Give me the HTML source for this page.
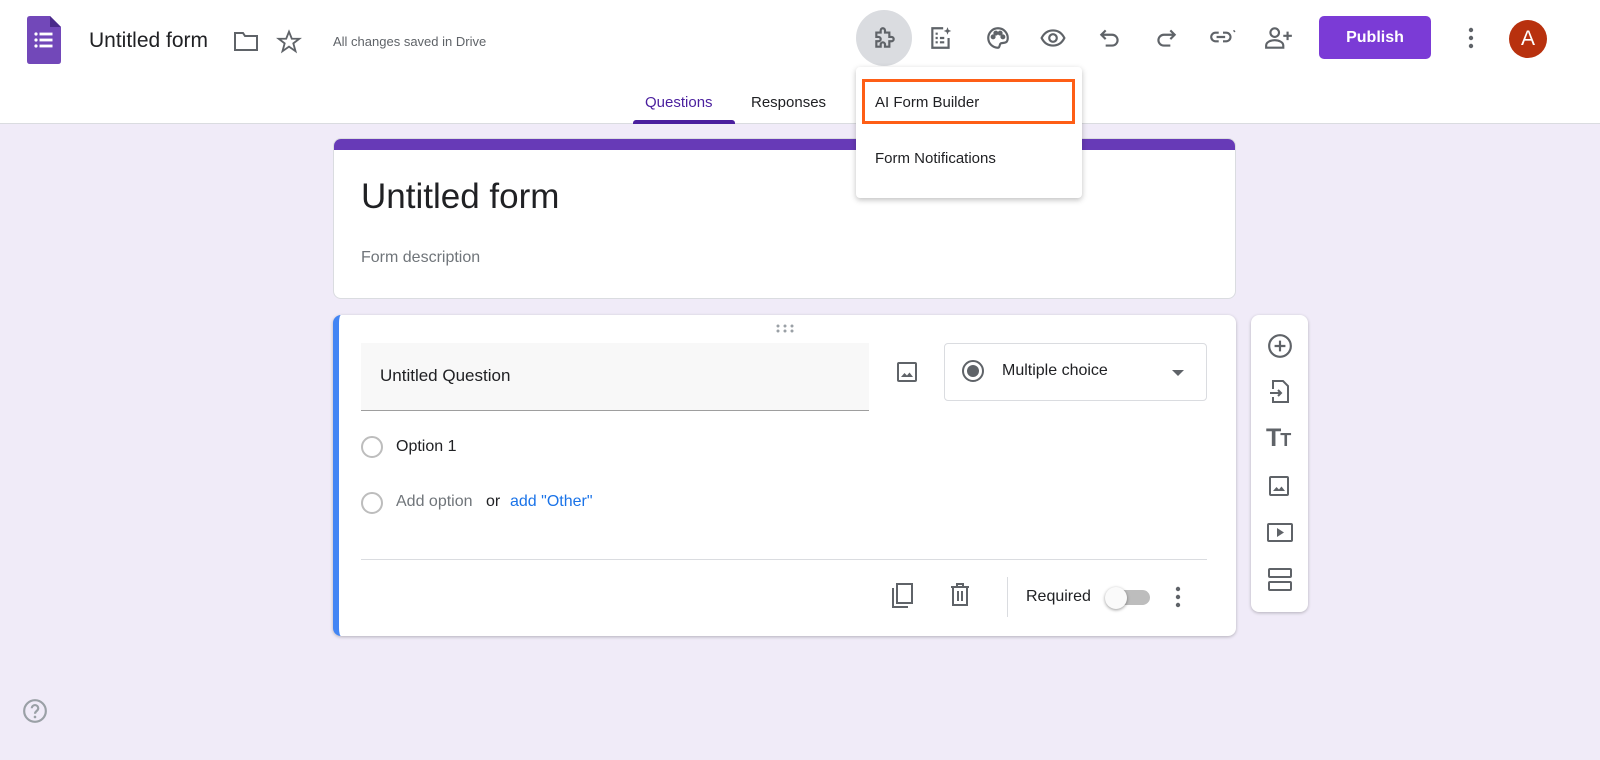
<!DOCTYPE html>
<html><head><style>
*{box-sizing:border-box;margin:0;padding:0}
body{width:1600px;height:760px;background:#f0ebf8;font-family:"Liberation Sans",Arial,sans-serif;position:relative;overflow:hidden;color:#202124}
.a{position:absolute}
svg{display:block}
.ic{fill:none;stroke:#5f6368;stroke-width:2}
</style></head><body>
<div class="a" style="left:0;top:0;width:1600px;height:124px;background:#fff;border-bottom:1px solid #dadce0"></div>
<!-- logo -->
<svg class="a" style="left:27px;top:16px" width="34" height="48" viewBox="0 0 34 48"><path d="M3 0H23L34 11V45Q34 48 31 48H3Q0 48 0 45V3Q0 0 3 0Z" fill="#7248b9"/><path d="M23 0V11H34Z" fill="#4a2a8a"/><g fill="#fff"><circle cx="9" cy="18" r="1.6"/><circle cx="9" cy="24" r="1.6"/><circle cx="9" cy="30" r="1.6"/><rect x="12.5" y="16.6" width="13" height="2.8"/><rect x="12.5" y="22.6" width="13" height="2.8"/><rect x="12.5" y="28.6" width="13" height="2.8"/></g></svg>
<div class="a" style="left:89px;top:29px;font-size:21px">Untitled form</div>
<svg class="a ic" style="left:233px;top:30px" width="26" height="22"><path d="M2 3H10L12 6H24V20H2Z"/></svg>
<svg class="a ic" style="left:276px;top:29px" width="26" height="26" viewBox="0 0 24 24"><path d="M12 2.5L14.6 9H21.5L16 13.3L18 20.5L12 16.3L6 20.5L8 13.3L2.5 9H9.4Z" stroke-width="1.7"/></svg>
<div class="a" style="left:333px;top:34px;font-size:13px;color:#5f6368">All changes saved in Drive</div>
<!-- right icons -->
<div class="a" style="left:856px;top:10px;width:56px;height:56px;border-radius:50%;background:#dadce0"></div>
<svg class="a ic" style="left:872px;top:25px" width="26" height="26" viewBox="0 0 24 24"><path d="M4 7H8V5A2 2 0 0 1 12 5V7H16V11H18A2 2 0 0 1 18 15H16V20H12V18A2 2 0 0 0 8 18V20H4V15H6A2 2 0 0 0 6 11H4Z"/></svg>
<svg class="a ic" style="left:928px;top:25px" width="26" height="26" viewBox="0 0 24 24"><path d="M14 3H4V21H19V12"/><path d="M7 8h2M7 12h2M7 16h2M11 12h4M11 16h4"/><path d="M18 2l1 2.5 2.5 1-2.5 1-1 2.5-1-2.5-2.5-1 2.5-1z" fill="#5f6368" stroke="none"/></svg>
<svg class="a ic" style="left:985px;top:25px" width="26" height="26" viewBox="0 0 24 24"><path d="M12 3A9 9 0 0 0 12 21C14 21 13 18 14.5 17S21 18 21 12A9 9 0 0 0 12 3Z"/><circle cx="7.5" cy="11" r="1.3" fill="#5f6368"/><circle cx="10" cy="7.5" r="1.3" fill="#5f6368"/><circle cx="14" cy="7.5" r="1.3" fill="#5f6368"/><circle cx="16.5" cy="11" r="1.3" fill="#5f6368"/></svg>
<svg class="a ic" style="left:1040px;top:25px" width="26" height="26" viewBox="0 0 24 24"><path d="M1.5 12C4 7 8 5 12 5S20 7 22.5 12C20 17 16 19 12 19S4 17 1.5 12Z"/><circle cx="12" cy="12" r="3.5"/></svg>
<svg class="a ic" style="left:1097px;top:25px" width="26" height="26" viewBox="0 0 24 24"><path d="M8 5L4 9L8 13M4 9H14A5 5 0 0 1 14 19H8"/></svg>
<svg class="a ic" style="left:1153px;top:25px" width="26" height="26" viewBox="0 0 24 24"><path d="M16 5L20 9L16 13M20 9H10A5 5 0 0 0 10 19H16"/></svg>
<svg class="a ic" style="left:1208px;top:24px" width="30" height="26" viewBox="0 0 28 24"><path d="M10 8H7A4 4 0 0 0 7 16H10M14 8H17A4 4 0 0 1 17 16H14M8 12H16"/><path d="M24 7l1-1" /></svg>
<svg class="a ic" style="left:1264px;top:24px" width="30" height="28" viewBox="0 0 28 26"><circle cx="10" cy="8" r="4"/><path d="M2 22V20C2 17 6 15 10 15S18 17 18 20V22Z"/><path d="M22 7V15M18 11H26"/></svg>
<div class="a" style="left:1319px;top:16px;width:112px;height:43px;border-radius:5px;background:#7b3bd6;color:#fff;font-weight:bold;font-size:16px;text-align:center;line-height:43px">Publish</div>
<svg class="a" style="left:1466px;top:26px" width="10" height="24"><g fill="#5f6368"><circle cx="5" cy="4" r="2.2"/><circle cx="5" cy="12" r="2.2"/><circle cx="5" cy="20" r="2.2"/></g></svg>
<div class="a" style="left:1509px;top:20px;width:38px;height:38px;border-radius:50%;background:#b8310e;color:#fff;font-size:21px;text-align:center;line-height:38px">A</div>
<!-- tabs -->
<div class="a" style="left:645px;top:94px;font-size:15px;color:#4a1f9e">Questions</div>
<div class="a" style="left:633px;top:120px;width:102px;height:4px;background:#4a1f9e;border-radius:3px 3px 0 0"></div>
<div class="a" style="left:751px;top:94px;font-size:15px;color:#202124">Responses</div>
<!-- title card -->
<div class="a" style="left:333px;top:138px;width:903px;height:161px;background:#fff;border-radius:8px;border:1px solid #dadce0;overflow:hidden">
<div style="height:11px;background:#673ab7"></div></div>
<div class="a" style="left:361px;top:177px;font-size:35px">Untitled form</div>
<div class="a" style="left:361px;top:249px;font-size:16px;color:#70757a">Form description</div>
<!-- question card -->
<div class="a" style="left:333px;top:315px;width:903px;height:321px;background:#fff;border-radius:8px;box-shadow:0 1px 3px rgba(0,0,0,.25);border-left:6px solid #4285f4"></div>
<svg class="a" style="left:775px;top:323px" width="20" height="10"><g fill="#9aa0a6"><circle cx="3" cy="3" r="1.5"/><circle cx="10" cy="3" r="1.5"/><circle cx="17" cy="3" r="1.5"/><circle cx="3" cy="8" r="1.5"/><circle cx="10" cy="8" r="1.5"/><circle cx="17" cy="8" r="1.5"/></g></svg>
<div class="a" style="left:361px;top:343px;width:508px;height:68px;background:#f8f8f8;border-bottom:1px solid #9e9e9e"></div>
<div class="a" style="left:380px;top:366px;font-size:17px">Untitled Question</div>
<svg class="a ic" style="left:895px;top:360px" width="24" height="24" viewBox="0 0 24 24"><rect x="3" y="3" width="18" height="18" rx="1"/><path d="M6 17L9.5 13L12 15.5L14.5 12.5L18 17Z" fill="#5f6368" stroke="none"/></svg>
<div class="a" style="left:944px;top:343px;width:263px;height:58px;border:1px solid #dadce0;border-radius:4px"></div>
<svg class="a" style="left:961px;top:359px" width="24" height="24"><circle cx="12" cy="12" r="10" fill="none" stroke="#5f6368" stroke-width="2"/><circle cx="12" cy="12" r="6" fill="#5f6368"/></svg>
<div class="a" style="left:1002px;top:362px;font-size:16px">Multiple choice</div>
<svg class="a" style="left:1171px;top:369px" width="14" height="8"><path d="M1 1H13L7 7Z" fill="#5f6368"/></svg>
<div class="a" style="left:361px;top:436px;width:22px;height:22px;border-radius:50%;border:2px solid #bdbdbd"></div>
<div class="a" style="left:396px;top:438px;font-size:16px">Option 1</div>
<div class="a" style="left:361px;top:492px;width:22px;height:22px;border-radius:50%;border:2px solid #bdbdbd"></div>
<div class="a" style="left:396px;top:493px;font-size:16px;color:#70757a">Add option</div>
<div class="a" style="left:486px;top:493px;font-size:16px">or</div>
<div class="a" style="left:510px;top:493px;font-size:16px;color:#1a73e8">add "Other"</div>
<div class="a" style="left:361px;top:559px;width:846px;height:1px;background:#dadce0"></div>
<svg class="a ic" style="left:890px;top:582px" width="26" height="28" viewBox="0 0 26 28"><path d="M3 6V25H18"/><rect x="7" y="2" width="15" height="19"/></svg>
<svg class="a ic" style="left:948px;top:582px" width="24" height="26" viewBox="0 0 24 26"><path d="M3 5H21M9 5V2H15V5M5 5V23H19V5M10 9V19M14 9V19"/></svg>
<div class="a" style="left:1007px;top:577px;width:1px;height:40px;background:#dadce0"></div>
<div class="a" style="left:1026px;top:588px;font-size:16px">Required</div>
<div class="a" style="left:1110px;top:590px;width:40px;height:15px;border-radius:8px;background:#bdbdbd"></div>
<div class="a" style="left:1105px;top:587px;width:22px;height:22px;border-radius:50%;background:#fafafa;box-shadow:0 1px 3px rgba(0,0,0,.4)"></div>
<svg class="a" style="left:1173px;top:586px" width="10" height="22"><g fill="#5f6368"><circle cx="5" cy="3" r="2.2"/><circle cx="5" cy="11" r="2.2"/><circle cx="5" cy="19" r="2.2"/></g></svg>
<!-- side toolbar -->
<div class="a" style="left:1251px;top:315px;width:57px;height:297px;background:#fff;border-radius:8px;box-shadow:0 1px 3px rgba(0,0,0,.25)"></div>
<svg class="a ic" style="left:1267px;top:333px" width="26" height="26" viewBox="0 0 24 24"><circle cx="12" cy="12" r="10"/><path d="M12 7V17M7 12H17"/></svg>
<svg class="a ic" style="left:1268px;top:379px" width="24" height="26" viewBox="0 0 24 26"><path d="M5 10V2H15L20 7V23H5V18M2 14H13M10 11L13 14L10 17"/></svg>
<div class="a" style="left:1266px;top:424px;font-size:25px;font-weight:bold;color:#5f6368;letter-spacing:-1px">T<span style="font-size:18px">T</span></div>
<svg class="a ic" style="left:1267px;top:474px" width="24" height="24" viewBox="0 0 24 24"><rect x="3" y="3" width="18" height="18" rx="1"/><path d="M6 17L9.5 13L12 15.5L14.5 12.5L18 17Z" fill="#5f6368" stroke="none"/></svg>
<svg class="a ic" style="left:1266px;top:521px" width="28" height="24" viewBox="0 0 28 24"><rect x="2" y="3" width="24" height="17" rx="1"/><path d="M11 7L18 11.5L11 16Z" fill="#5f6368" stroke="none"/></svg>
<svg class="a ic" style="left:1266px;top:567px" width="28" height="26" viewBox="0 0 28 26"><rect x="3" y="2" width="22" height="8" rx="1"/><rect x="3" y="15" width="22" height="8" rx="1"/></svg>
<!-- help -->
<svg class="a" style="left:22px;top:698px" width="26" height="26" viewBox="0 0 24 24"><circle cx="12" cy="12" r="10" fill="none" stroke="#9aa0a6" stroke-width="2"/><path d="M9 9.5A3 3 0 0 1 15 9.5C15 12 12 12 12 14.5" fill="none" stroke="#9aa0a6" stroke-width="2"/><circle cx="12" cy="17.5" r="1.2" fill="#9aa0a6"/></svg>
<!-- menu -->
<div class="a" style="left:856px;top:67px;width:226px;height:131px;background:#fff;border-radius:4px;box-shadow:0 2px 6px rgba(0,0,0,.25)"></div>
<div class="a" style="left:862px;top:79px;width:213px;height:45px;border:3px solid #fe5e16"></div>
<div class="a" style="left:875px;top:94px;font-size:15px">AI Form Builder</div>
<div class="a" style="left:875px;top:150px;font-size:15px">Form Notifications</div>
</body></html>
